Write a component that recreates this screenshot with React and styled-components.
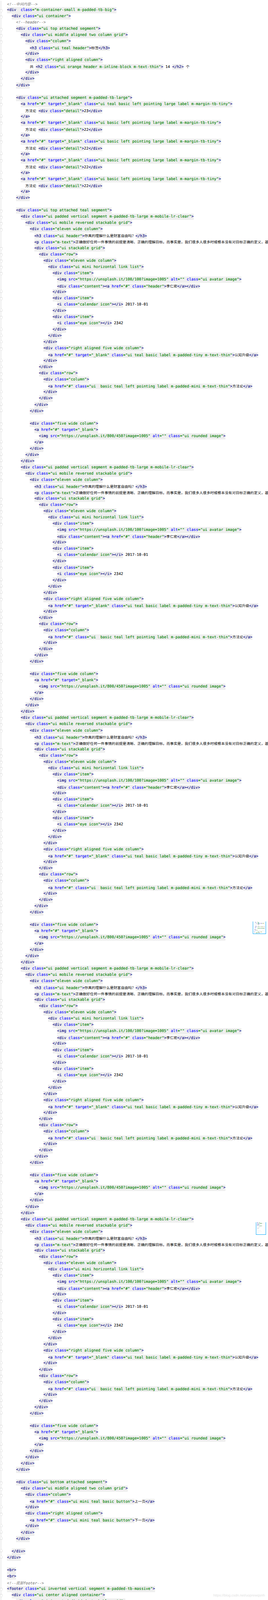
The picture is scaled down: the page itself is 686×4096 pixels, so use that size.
import React from 'react';
import styled, { createGlobalStyle } from 'styled-components';

const Global = createGlobalStyle`
  html, body { margin: 0; padding: 0; background: #fff; height: 4096px; overflow: hidden; }
`;

const Page = styled.main`
  position: relative;
  width: 686px;
  height: 4096px;
  overflow: hidden;
  padding-top: 2px;
  box-sizing: border-box;
  background: #fff;
  font-family: "DejaVu Sans Mono", "Noto Sans CJK SC", monospace;
  font-size: 9.68px;
  text-rendering: geometricPrecision;
  -webkit-text-stroke: 0.14px currentColor;
`;
const Row = styled.div`
  display: flex;
  height: 16.032px;
  line-height: 16.032px;
  &:nth-child(even) { height: 16.05px; }
`;
const Gutter = styled.div`
  position: relative;
  flex: 0 0 18.07px;
  &::before {
    content: "";
    position: absolute;
    left: 2px;
    top: 0;
    bottom: 0;
    width: 1px;
    background: #d6d6d6;
  }
`;
const FoldMark = styled.svg`
  position: absolute;
  left: 0;
  top: ${(p) => (p.$up ? '1.5px' : '5.5px')};
  width: 6px;
  height: 8.5px;
`;
const Code = styled.div`
  flex: 1;
  min-width: 0;
  overflow: hidden;
  white-space: pre;
  color: #000;
`;
const Tag = styled.span`
  display: inline-block;
  height: 16.05px;
  background: #efefef;
  color: #000080;
`;
const AttrName = styled.span`color: #0000ff;`;
const AttrValue = styled.span`color: #008000;`;
const Cjk = styled.span`
  font-family: "Noto Sans CJK SC", sans-serif;
  font-size: 9.33px;
  -webkit-text-stroke: 0;
`;
const Comment = styled.span`
  color: #808080;
  font-style: italic;
`;
const Thumb = styled.svg`
  position: absolute;
  display: block;
  box-sizing: border-box;
  border: 1px solid #0aa8f8;
  border-top: 0;
  background: #fff;
  left: ${(p) => p.$left}px;
  top: ${(p) => p.$top}px;
  width: ${(p) => p.$w}px;
  height: 31.5px;
`;
const Watermark = styled.div`
  position: absolute;
  left: 546px;
  top: 4078px;
  font-family: "Liberation Sans", Arial, sans-serif;
  font-size: 9px;
  line-height: 12px;
  color: #e2e2e2;
  white-space: nowrap;
  -webkit-text-stroke: 0;
`;

const LONG = '正确做好任何一件事情的前提是清晰、正确的理解目标。而事实是，我们很多人很多时候根本没有对目标正确的定义，甚至根本没有想过';

const label = (cls, n) => [
  [3, `<a href="#" target="_blank" class="${cls}">`],
  [4, `方法论 <div class="detail">${n}</div>`],
  [3, '</a>'],
];

const block = () => [
  [3, '<div class="ui padded vertical segment m-padded-tb-large m-mobile-lr-clear">'],
  [4, '<div class="ui mobile reversed stackable grid">'],
  [5, '<div class="eleven wide column">'],
  [6, '<h3 class="ui header">你真的理解什么是财富自由吗？</h3>'],
  [6, `<p class="m-text">${LONG}`],
  [6, '<div class="ui stackable grid">'],
  [7, '<div class="row">'],
  [8, '<div class="eleven wide column">'],
  [9, '<div class="ui mini horizontal link list">'],
  [10, '<div class="item">'],
  [11, '<img src="https://unsplash.it/100/100?image=1005" alt="" class="ui avatar image">'],
  [11, '<div class="content"><a href="#" class="header">李仁密</a></div>'],
  [10, '</div>'],
  [10, '<div class="item">'],
  [11, '<i class="calendar icon"></i> 2017-10-01'],
  [10, '</div>'],
  [10, '<div class="item">'],
  [11, '<i class="eye icon"></i> 2342'],
  [10, '</div>'],
  [9, '</div>'],
  [8, '</div>'],
  [8, '<div class="right aligned five wide column">'],
  [9, '<a href="#" target="_blank" class="ui teal basic label m-padded-tiny m-text-thin">认知升级</a>'],
  [8, '</div>'],
  [7, '</div>'],
  [7, '<div class="row">'],
  [8, '<div class="column">'],
  [9, '<a href="#" class="ui  basic teal left pointing label m-padded-mini m-text-thin">方法论</a>'],
  [8, '</div>'],
  [7, '</div>'],
  [6, '</div>'],
  [5, '</div>'],
  [0, ''],
  [5, '<div class="five wide column">'],
  [6, '<a href="#" target="_blank">'],
  [7, '<img src="https://unsplash.it/800/450?image=1005" alt="" class="ui rounded image">'],
  [6, '</a>'],
  [5, '</div>'],
  [4, '</div>'],
  [3, '</div>'],
];

const LB = 'ui basic left pointing large label m-margin-tb-tiny';

const LINES = [
  [0, '<!--中间内容-->'],
  [0, '<div  class="m-container-small m-padded-tb-big">'],
  [1, '<div class="ui container">'],
  [2, '<!--header-->'],
  [2, '<div class="ui top attached segment">'],
  [3, '<div class="ui middle aligned two column grid">'],
  [4, '<div class="column">'],
  [5, '<h3 class="ui teal header">标签</h3>'],
  [4, '</div>'],
  [4, '<div class="right aligned column">'],
  [5, '共 <h2 class="ui orange header m-inline-block m-text-thin"> 14 </h2> 个'],
  [4, '</div>'],
  [3, '</div>'],
  [2, '</div>'],
  [0, ''],
  [2, '<div class="ui attached segment m-padded-tb-large">'],
  ...label('ui teal basic left pointing large label m-margin-tb-tiny', 23),
  ...label(LB, 22),
  ...label(LB, 22),
  ...label(LB, 22),
  ...label(LB, 22),
  [2, '</div>'],
  [0, ''],
  [2, '<div class="ui top attached teal segment">'],
  ...block(),
  ...block(),
  ...block(),
  ...block(),
  ...block(),
  [2, '</div>'],
  [0, ''],
  [2, '<div class="ui bottom attached segment">'],
  [3, '<div class="ui middle aligned two column grid">'],
  [4, '<div class="column">'],
  [5, '<a href="#" class="ui mini teal basic button">上一页</a>'],
  [4, '</div>'],
  [4, '<div class="right aligned column">'],
  [5, '<a href="#" class="ui mini teal basic button">下一页</a>'],
  [4, '</div>'],
  [3, '</div>'],
  [2, '</div>'],
  [0, ''],
  [1, '</div>'],
  [0, '</div>'],
  [0, ''],
  [0, '<br>'],
  [0, '<br>'],
  [0, '<!--底部footer-->'],
  [0, '<footer class="ui inverted vertical segment m-padded-tb-massive">'],
  [1, '<div class="ui center aligned container">'],
  [2, '<div class="ui inverted divided stackable grid">'],
];

const CJK_SPLIT = /([\u3000-\u9fff\uff00-\uffef]+)/;

function Text({ value }) {
  return value.split(CJK_SPLIT).map((part, i) =>
    i % 2 ? <Cjk key={i}>{part}</Cjk> : part
  );
}

function TagToken({ source }) {
  const attrs = source.split(/(\s*[a-zA-Z-]+=)("[^"]*")/);
  return (
    <Tag>
      {attrs.map((part, i) => {
        if (i % 3 === 1) {
          const eq = part.length - 1;
          return (
            <React.Fragment key={i}>
              <AttrName>{part.slice(0, eq)}</AttrName>
              <AttrValue>=</AttrValue>
            </React.Fragment>
          );
        }
        if (i % 3 === 2) return <AttrValue key={i}>{part}</AttrValue>;
        return part;
      })}
    </Tag>
  );
}

const TOKENS = /<!--.*?-->|<\/?[a-z0-9]+(?:\s+[a-z]+="[^"]*")*\s*>|[^<]+/g;

function Source({ text }) {
  const tokens = text.match(TOKENS) || [];
  return tokens.map((t, i) => {
    if (t.startsWith('<!--')) return <Comment key={i}><Text value={t} /></Comment>;
    if (t.startsWith('<')) return <TagToken key={i} source={t} />;
    return <Text key={i} value={t} />;
  });
}

function foldOf(text) {
  if (/^<\/[a-z0-9]+>$/.test(text)) return 'up';
  if (/^<(?!\/|!|img|br)[^>]*>$/.test(text)) return 'down';
  return null;
}

function Fold({ dir }) {
  const up = dir === 'up';
  return (
    <FoldMark $up={up} viewBox="0 0 12 17">
      <polygon
        points={up ? '0.8,16 0.8,6 6,1 11.2,6 11.2,16' : '0.8,1 11.2,1 11.2,11 6,16 0.8,11'}
        fill="#fff"
        stroke="#cfcfcf"
        strokeWidth="1.6"
      />
    </FoldMark>
  );
}

const T1 = [
  [20, 2, 30, '#ececec'], [62, 2, 4, '#3a9a3a'], [25, 10, 55, '#ececec'], [27, 10, 8, '#2a2ab8'], [65, 10, 10, '#3aa060'],
  [45, 14, 30, '#ececec'], [70, 14, 10, '#30a890'], [35, 23, 115, '#ececec'], [40, 23, 6, '#2a2ab8'], [62, 23, 14, '#2a9a2a'],
  [75, 23, 14, '#2a60c8'], [100, 23, 20, '#6060c0'], [125, 23, 25, '#a0b050'], [30, 35, 25, '#ececec'], [60, 35, 25, '#8888c0'],
  [32, 47, 25, '#ececec'], [72, 47, 8, '#b08040'], [32, 58, 8, '#e0e0e0'], [32, 62, 8, '#705090'], [27, 70, 136, '#ececec'],
  [36, 70, 8, '#2020c0'], [60, 70, 30, '#70a870'], [100, 70, 40, '#a0b070'], [152, 70, 4, '#202020'], [25, 82, 10, '#2a2ab8'],
  [30, 91, 130, '#ececec'], [60, 91, 30, '#50a850'], [90, 91, 20, '#60b0a0'], [110, 91, 40, '#60a860'], [150, 91, 4, '#202020'],
  [22, 105, 8, '#202080'], [22, 115, 40, '#ececec'], [22, 115, 10, '#2a2ab8'], [45, 115, 12, '#90a040'], [28, 123, 115, '#ececec'],
  [15, 140, 8, '#2020a0'], [25, 140, 95, '#e8f0e0'], [60, 140, 25, '#60b080'], [100, 140, 20, '#90a050'], [20, 152, 20, '#ececec'],
  [40, 152, 20, '#2a8a2a'], [70, 152, 20, '#707090'],
];
const T2 = [
  [12, 2, 40, '#ececec'], [14, 2, 8, '#2a2ab8'], [40, 2, 10, '#3a9a3a'], [14, 12, 90, '#ececec'], [16, 12, 10, '#2a2ab8'], [50, 12, 30, '#3a9a3a'],
  [14, 22, 70, '#e8e8e8'], [30, 22, 20, '#60b0a0'], [10, 34, 25, '#2a2ab8'], [10, 46, 80, '#ececec'], [40, 46, 40, '#70b070'], [10, 58, 60, '#ececec'],
  [16, 70, 40, '#e4e4e4'], [14, 82, 20, '#b0b0c0'], [14, 110, 50, '#eeeeee'], [20, 125, 60, '#f0f0f0'], [12, 140, 30, '#f0f0f0'],
];

function MiniPage({ rows, width, left, top, w }) {
  return (
    <Thumb $left={left} $top={top} $w={w} viewBox={`0 0 ${width} 162`} preserveAspectRatio="none">
      {rows.map(([x, y, rw, fill], i) => (
        <rect key={i} x={x} y={y} width={rw} height="5" fill={fill} />
      ))}
    </Thumb>
  );
}

export default function App() {
  return (
    <Page>
      <Global />
      {LINES.map(([indent, text], i) => {
        const fold = foldOf(text);
        return (
          <Row key={i}>
            <Gutter>{fold && <Fold dir={fold} />}</Gutter>
            <Code>
              {'  '.repeat(indent)}
              <Source text={text} />
            </Code>
          </Row>
        );
      })}
      <MiniPage rows={T1} width={171} left={647} top={2359} w={34} />
      <MiniPage rows={T2} width={132} left={655} top={3129} w={26} />
      <Watermark>https://blog.csdn.net/uoprewqsnh</Watermark>
    </Page>
  );
}
